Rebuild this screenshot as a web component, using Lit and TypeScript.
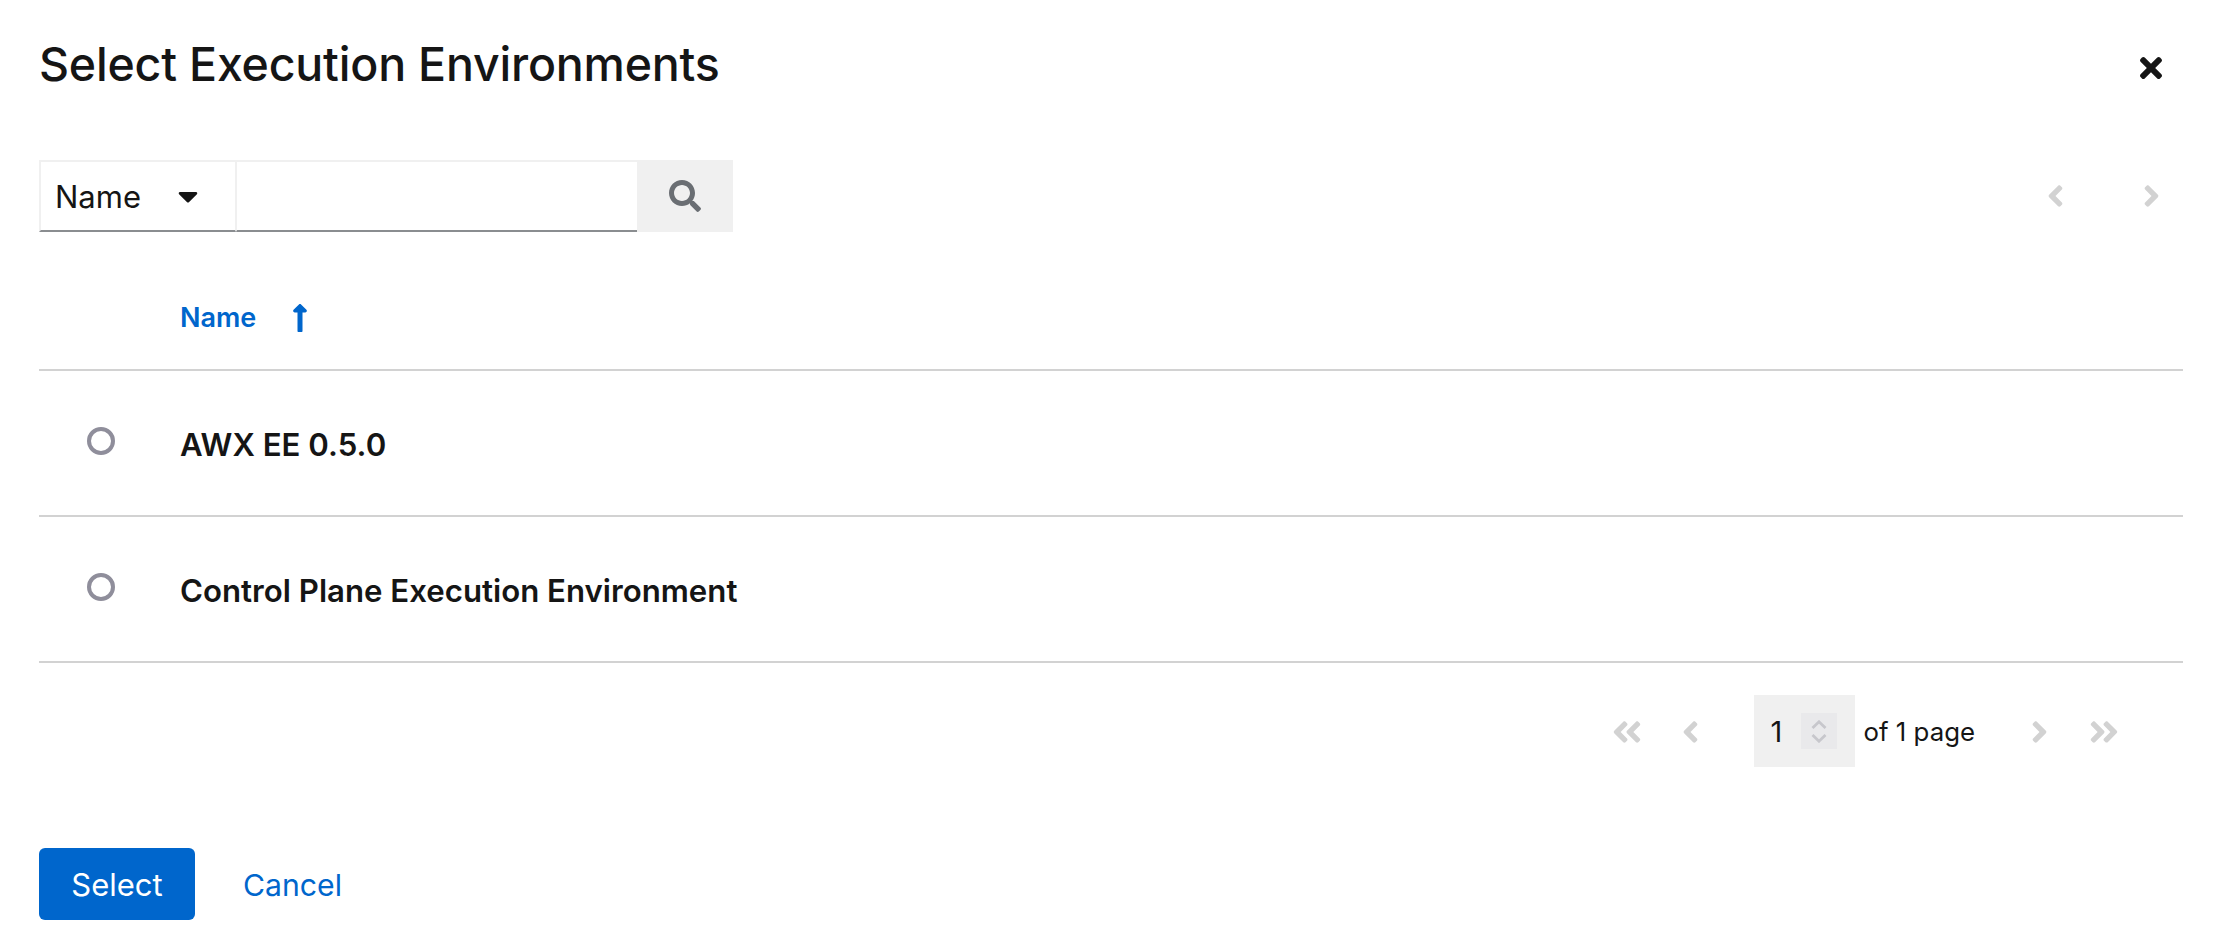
import { LitElement, html, css, svg } from "lit";
import { customElement } from "lit/decorators.js";

const P: Record<string, [string, string]> = {
  times: ["0 0 352 512", "M242.72 256l100.07-100.07c12.28-12.28 12.28-32.19 0-44.48l-22.24-22.24c-12.28-12.28-32.19-12.28-44.48 0L176 189.28 75.93 89.21c-12.28-12.28-32.19-12.28-44.48 0L9.21 111.45c-12.28 12.28-12.28 32.19 0 44.48L109.28 256 9.21 356.07c-12.28 12.28-12.28 32.19 0 44.48l22.24 22.24c12.28 12.28 32.2 12.28 44.48 0L176 322.72l100.07 100.07c12.28 12.28 32.2 12.28 44.48 0l22.24-22.24c12.28-12.28 12.28-32.19 0-44.48L242.72 256z"],
  left: ["0 0 256 512", "M31.7 239l136-136c9.4-9.4 24.6-9.4 33.9 0l22.6 22.6c9.4 9.4 9.4 24.6 0 33.9L127.9 256l96.4 96.4c9.4 9.4 9.4 24.6 0 33.9L201.7 409c-9.4 9.4-24.6 9.4-33.9 0l-136-136c-9.5-9.4-9.5-24.6-.1-34z"],
  right: ["0 0 256 512", "M224.3 273l-136 136c-9.4 9.4-24.6 9.4-33.9 0l-22.6-22.6c-9.4-9.4-9.4-24.6 0-33.9l96.4-96.4-96.4-96.4c-9.4-9.4-9.4-24.6 0-33.9L54.3 103c9.4-9.4 24.6-9.4 33.9 0l136 136c9.5 9.4 9.5 24.6.1 34z"],
  dleft: ["0 0 448 512", "M223.7 239l136-136c9.4-9.4 24.6-9.4 33.9 0l22.6 22.6c9.4 9.4 9.4 24.6 0 33.9L319.9 256l96.4 96.4c9.4 9.4 9.4 24.6 0 33.9L393.7 409c-9.4 9.4-24.6 9.4-33.9 0l-136-136c-9.5-9.4-9.5-24.6-.1-34zm-192 34l136 136c9.4 9.4 24.6 9.4 33.9 0l22.6-22.6c9.4-9.4 9.4-24.6 0-33.9L127.9 256l96.4-96.4c9.4-9.4 9.4-24.6 0-33.9L201.7 103c-9.4-9.4-24.6-9.4-33.9 0l-136 136c-9.5 9.4-9.5 24.6-.1 34z"],
  dright: ["0 0 448 512", "M224.3 273l-136 136c-9.4 9.4-24.6 9.4-33.9 0l-22.6-22.6c-9.4-9.4-9.4-24.6 0-33.9l96.4-96.4-96.4-96.4c-9.4-9.4-9.4-24.6 0-33.9L54.3 103c9.4-9.4 24.6-9.4 33.9 0l136 136c9.5 9.4 9.5 24.6.1 34zm192-34l-136-136c-9.4-9.4-24.6-9.4-33.9 0l-22.6 22.6c-9.4 9.4-9.4 24.6 0 33.9l96.4 96.4-96.4 96.4c-9.4 9.4-9.4 24.6 0 33.9l22.6 22.6c9.4 9.4 24.6 9.4 33.9 0l136-136c9.4-9.2 9.4-24.4 0-33.8z"],
  search: ["0 0 512 512", "M505 442.7L405.3 343c-4.5-4.5-10.6-7-17-7H372c27.6-35.3 44-79.7 44-128C416 93.1 322.9 0 208 0S0 93.1 0 208s93.1 208 208 208c48.3 0 92.7-16.4 128-44v16.3c0 6.4 2.5 12.5 7 17l99.7 99.7c9.4 9.4 24.6 9.4 33.9 0l28.3-28.3c9.4-9.4 9.4-24.6.1-34zM208 336c-70.7 0-128-57.2-128-128 0-70.7 57.2-128 128-128 70.7 0 128 57.2 128 128 0 70.7-57.2 128-128 128z"],
  caret: ["0 0 320 512", "M31.3 192h257.3c17.8 0 26.7 21.5 14.1 34.1L174.1 354.8c-7.8 7.8-20.5 7.8-28.3 0L17.2 226.1C4.6 213.5 13.5 192 31.3 192z"],
  up: ["0 0 256 512", "M88 166.059V468c0 6.627 5.373 12 12 12h56c6.627 0 12-5.373 12-12V166.059h46.059c21.382 0 32.09-25.851 16.971-40.971l-86.059-86.059c-9.373-9.373-24.569-9.373-33.941 0l-86.059 86.059c-15.119 15.119-4.411 40.971 16.971 40.971H88z"],
};

const icon = (n: string, cls: string) => html`<svg class="ic ${cls}" viewBox=${P[n][0]} fill="currentColor">${svg`<path d=${P[n][1]}></path>`}</svg>`;

@customElement("app-root")
export class AppRoot extends LitElement {
  static styles = css`
    :host { display: block; width: 2220px; height: 948px; background: #fff; color: #151515; font-family: Inter, "Liberation Sans", sans-serif; font-size: 31px; overflow: hidden; }
    * { box-sizing: border-box; }
    .ic { display: block; flex: none; }
    .page { display: flex; flex-direction: column; padding: 0 37px 0 39px; }
    .head { height: 160px; display: flex; justify-content: space-between; padding: 44px 21px 0 0; align-items: flex-start; }
    h1 { margin: 0; font-size: 46.5px; line-height: 40px; font-weight: 500; letter-spacing: -0.2px; color: #151515; }
    .close { width: 22px; height: 32px; margin-top: 8px; color: #151515; }
    .toolbar { height: 72px; display: flex; justify-content: space-between; align-items: center; padding-right: 23px; }
    .group { display: flex; height: 72px; }
    .sel { width: 197px; border: 2px solid #f0f0f0; border-right-width: 1px; border-bottom: 2px solid #8a8d90; display: flex; align-items: center; padding-left: 14px; gap: 37px; }
    .caret { width: 20px; height: 32px; }
    .inp { width: 401px; border: 2px solid #f0f0f0; border-left-width: 1px; border-right: 0; border-bottom: 2px solid #8a8d90; }
    .btn { width: 96px; background: #f0f0f0; display: flex; align-items: center; justify-content: center; color: #6a6e73; }
    .search { width: 32px; height: 32px; }
    .nav { display: flex; gap: 79px; color: #d2d2d2; }
    .chev { width: 17px; height: 34px; }
    .th { height: 139px; display: flex; align-items: flex-start; padding: 71px 0 0 141px; gap: 36px; color: #06c; font-weight: 600; font-size: 27px; line-height: 30px; border-bottom: 2px solid #d2d2d2; }
    .arrow { width: 16px; height: 32px; margin-top: -1px; }
    .row { height: 146px; border-bottom: 2px solid #d2d2d2; display: flex; align-items: center; font-weight: 600; font-size: 31.2px; }
    .row span { padding-top: 3px; }
    .radio { width: 28px; height: 28px; border: 4px solid #8f8e9b; border-radius: 50%; margin: -4px 65px 0 48px; }
    .pg { height: 105px; display: flex; align-items: flex-start; justify-content: flex-end; padding: 32px 64px 0 0; color: #d2d2d2; }
    .pg > .dbl, .pg > .one, .pg > div > .ic { margin-top: 20px; }
    .dbl { width: 30px; height: 34px; }
    .one { width: 17px; height: 34px; }
    .gap1 { margin-left: 40px; }
    .gap2 { margin-left: 41px; }
    .pinput { width: 101px; height: 72px; background: #f0f0f0; display: flex; align-items: center; padding-left: 17px; margin-left: 55px; font-size: 29px; color: #151515; }
    .num { width: 30px; }
    .spin { width: 36px; height: 36px; background: #e9e9eb; display: flex; flex-direction: column; align-items: center; justify-content: center; gap: 5px; color: #c7c7cc; }
    .spin svg { display: block; }
    .of { margin: 0 56px 0 9px; height: 72px; line-height: 74px; font-size: 25.8px; white-space: nowrap; color: #151515; }
    .foot { margin-top: 80px; display: flex; align-items: center; gap: 48px; }
    .select { width: 156px; height: 72px; background: #06c; color: #fff; border-radius: 6px; display: flex; align-items: center; justify-content: center; font-size: 31px; }
    .cancel { color: #06c; font-size: 30.2px; padding-top: 1px; }
  `;

  render() {
    return html`<div class="page">
      <div class="head"><h1>Select Execution Environments</h1>${icon("times", "close")}</div>
      <div class="toolbar">
        <div class="group">
          <div class="sel"><span>Name</span>${icon("caret", "caret")}</div>
          <div class="inp"></div>
          <div class="btn">${icon("search", "search")}</div>
        </div>
        <div class="nav">${icon("left", "chev")}${icon("right", "chev")}</div>
      </div>
      <div class="th"><span>Name</span>${icon("up", "arrow")}</div>
      <div class="row"><div class="radio"></div><span>AWX EE 0.5.0</span></div>
      <div class="row"><div class="radio"></div><span>Control Plane Execution Environment</span></div>
      <div class="pg">
        ${icon("dleft", "dbl")}
        <div class="gap1">${icon("left", "one")}</div>
        <div class="pinput"><span class="num">1</span>
          <div class="spin">
            <svg width="16" height="9" viewBox="0 0 16 9" fill="none" stroke="currentColor" stroke-width="2.8"><path d="M1.5 8L8 1.8 14.5 8"/></svg>
            <svg width="16" height="9" viewBox="0 0 16 9" fill="none" stroke="currentColor" stroke-width="2.8"><path d="M1.5 1L8 7.2 14.5 1"/></svg>
          </div>
        </div>
        <span class="of">of 1 page</span>
        ${icon("right", "one")}
        <div class="gap2">${icon("dright", "dbl")}</div>
      </div>
      <div class="foot"><div class="select">Select</div><span class="cancel">Cancel</span></div>
    </div>`;
  }
}
